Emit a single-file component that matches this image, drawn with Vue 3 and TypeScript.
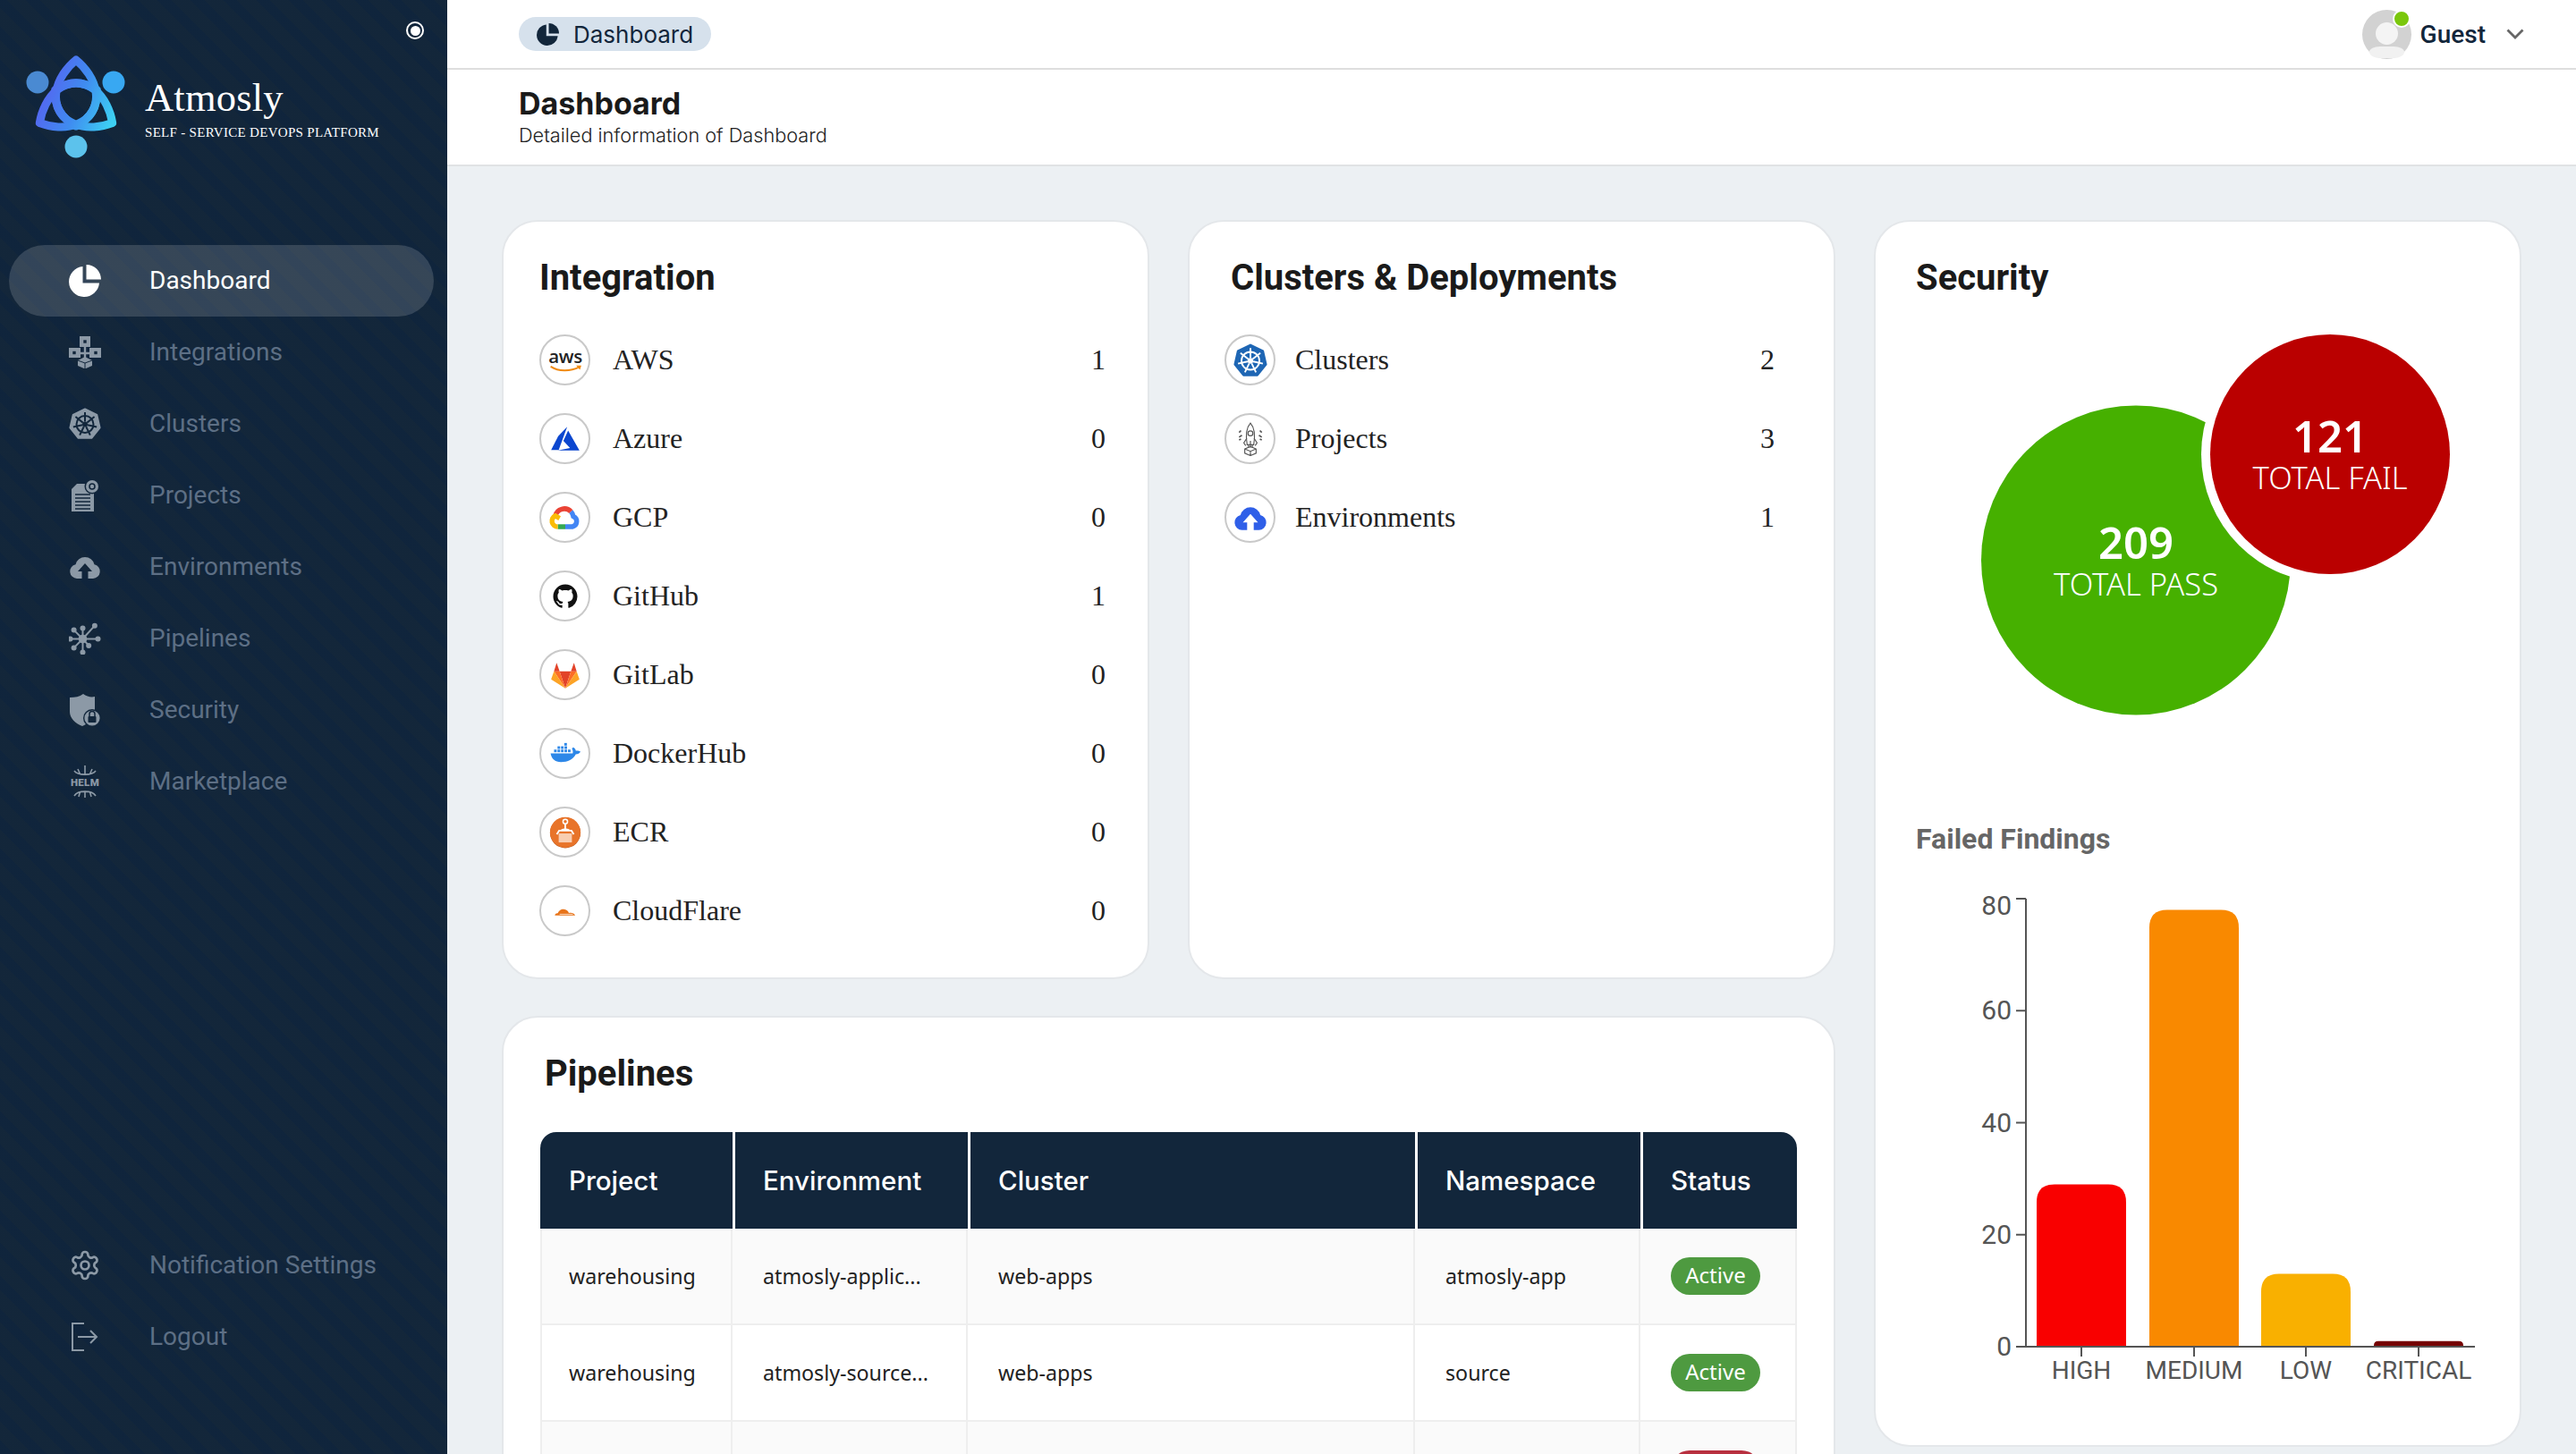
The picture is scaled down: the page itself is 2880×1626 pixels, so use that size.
<script setup lang="ts">
interface NavItem {
  label: string
  icon: string
  active?: boolean
}

interface CountItem {
  label: string
  icon: string
  count: number
}

// Chart geometry
const chartLeft = 168
const chartTop = 20
const chartBottom = 521
const pxPerUnit = (chartBottom - chartTop) / 80

// Helpers for the icons that repeat a shape around a circle
const polar = (cx: number, cy: number, r: number, deg: number) => {
  const a = (deg * Math.PI) / 180
  return [+(cx + r * Math.cos(a)).toFixed(2), +(cy + r * Math.sin(a)).toFixed(2)]
}

const heptagon = (fill: string) => {
  const pts = [0, 1, 2, 3, 4, 5, 6].map((i) => polar(18, 18.5, 17, -90 + (i * 360) / 7).join(',')).join(' ')
  return `<polygon points="${pts}" fill="${fill}" stroke="${fill}" stroke-width="2" stroke-linejoin="round"/>`
}

const wheel = (color: string, sw: number) => {
  const spokes = [0, 1, 2, 3, 4, 5, 6]
    .map((i) => {
      const deg = -90 + (i * 360) / 7
      const [x1, y1] = polar(18, 18.5, 3, deg)
      const [x2, y2] = polar(18, 18.5, 13.5, deg)
      return `<path d="M${x1} ${y1}L${x2} ${y2}"/>`
    })
    .join('')
  return `<g fill="none" stroke="${color}" stroke-width="${sw}"><circle cx="18" cy="18.5" r="9.5"/>${spokes}</g><circle cx="18" cy="18.5" r="3" fill="${color}"/>`
}

const cloud = 'M9 31A8 8 0 0 1 7.5 15.2A10.8 10.8 0 0 1 28.5 15.2A8 8 0 0 1 27 31H21.5V23H26L18 14L10 23H14.5V31Z'
const pie = '<path d="M15.5 2A17 17 0 1 0 34 20.5H15.5Z"/><path d="M19.5 0A16.5 16.5 0 0 1 36 16.5H19.5Z"/>'

const hubDots = [
  [-90, 12], [-48, 20], [0, 17], [48, 10], [90, 15], [135, 14], [180, 14], [-135, 14]
]
  .map(([deg, r]) => {
    const [x, y] = polar(15.5, 18.5, r, deg)
    return `<path d="M15.5 18.5L${x} ${y}" stroke="#8c99a6" stroke-width="2"/><circle cx="${x}" cy="${y}" r="3"/>`
  })
  .join('')

const icons: Record<string, string> = {
  pie,
  integrations:
    '<rect x="12" y="0" width="12" height="12"/><rect x="0" y="13" width="13" height="11"/><rect x="23" y="13" width="13" height="11"/>' +
    '<path d="M18 10V25M11 19H25" stroke="#8c99a6" stroke-width="2.4"/><path d="M18 23L26 27V33L18 36.5L10 33V27Z"/>' +
    '<rect x="16.3" y="4.3" width="3.4" height="3.4" fill="#12263b"/><rect x="4.3" y="16.8" width="3.4" height="3.4" fill="#12263b"/><rect x="28.3" y="16.8" width="3.4" height="3.4" fill="#12263b"/>' +
    '<path d="M18 30V36M10 27L18 30L26 27" stroke="#12263b" stroke-width="1" fill="none"/>',
  clusters: heptagon('#8c99a6') + wheel('#12263b', 2),
  projects:
    '<path d="M9 5H21V36H3V11Z"/><path d="M19 5H28V36H19Z"/>' +
    '<path d="M7 17H24M7 21H24M7 25H24M7 29H24M7 33H24" stroke="#12263b" stroke-width="1.4"/>' +
    '<circle cx="26" cy="8" r="8.5" fill="#12263b"/><circle cx="26" cy="8" r="7"/><circle cx="26" cy="8" r="3" fill="none" stroke="#12263b" stroke-width="1.6"/>',
  cloud: `<path d="${cloud}"/>`,
  hub: `<circle cx="15.5" cy="18.5" r="4.8"/>${hubDots}`,
  shield:
    '<path d="M1 4C7 4 12 3 16 0C20 3 25 4 29 3V20C29 28 22 33 15 36C7 33 1 27 1 20Z"/>' +
    '<circle cx="26" cy="27" r="10" fill="#12263b"/><circle cx="26" cy="27" r="8.6"/>' +
    '<rect x="21.5" y="25" width="9" height="7" rx="1" fill="#12263b"/><path d="M23 25V22.5A3 3 0 0 1 29 22.5V25" fill="none" stroke="#12263b" stroke-width="1.5"/>',
  helm:
    '<g fill="none" stroke="#8c99a6" stroke-width="1.6"><path d="M6 6C10 11.5 26 11.5 30 6M18 0V10M10 4L12.5 9.5M26 4L23.5 9.5"/><path d="M6 34C10 27.5 26 27.5 30 34M18 36V28.5M11 35L12.5 29.5M25 35L23.5 29.5"/></g>' +
    '<text x="18" y="23" text-anchor="middle" font-family="Roboto, sans-serif" font-weight="900" font-size="11.5" letter-spacing=".3">HELM</text>',
  gear:
    '<g transform="scale(1.5)" fill="none" stroke="#8c99a6" stroke-width="1.8"><path d="M12.22 2h-.44a2 2 0 0 0-2 2v.18a2 2 0 0 1-1 1.73l-.43.25a2 2 0 0 1-2 0l-.15-.08a2 2 0 0 0-2.73.73l-.22.38a2 2 0 0 0 .73 2.73l.15.1a2 2 0 0 1 1 1.72v.51a2 2 0 0 1-1 1.74l-.15.09a2 2 0 0 0-.73 2.73l.22.38a2 2 0 0 0 2.73.73l.15-.08a2 2 0 0 1 2 0l.43.25a2 2 0 0 1 1 1.73V20a2 2 0 0 0 2 2h.44a2 2 0 0 0 2-2v-.18a2 2 0 0 1 1-1.73l.43-.25a2 2 0 0 1 2 0l.15.08a2 2 0 0 0 2.73-.73l.22-.39a2 2 0 0 0-.73-2.73l-.15-.08a2 2 0 0 1-1-1.74v-.5a2 2 0 0 1 1-1.74l.15-.09a2 2 0 0 0 .73-2.73l-.22-.38a2 2 0 0 0-2.73-.73l-.15.08a2 2 0 0 1-2 0l-.43-.25a2 2 0 0 1-1-1.73V4a2 2 0 0 0-2-2z"/><circle cx="12" cy="12" r="3"/></g>',
  logout:
    '<path d="M17 3H4V33H17M10 18H31M24 11L31 18L24 25" fill="none" stroke="#8c99a6" stroke-width="2"/>',

  aws:
    '<text x="18" y="20.5" text-anchor="middle" font-family="Open Sans, sans-serif" font-weight="600" font-size="19.5" letter-spacing="-.4" fill="#222">aws</text>' +
    '<path d="M2.5 24.5C11 30 23 30 33 25" fill="none" stroke="#f08a12" stroke-width="1.8"/><path d="M29.5 23.5L35 23.5L33.5 28Z" fill="#f08a12"/>',
  azure:
    '<g fill="#0c47cf"><path d="M20 5L10.5 15L3 29.5H11Z"/><path d="M21 9L16 20L23 27.5L10 30H33Z"/></g>',
  gcp:
    '<g fill="none" stroke-width="5.2">' +
    '<path d="M7.5 16A9.7 9.7 0 0 1 24 11.5" stroke="#ea4335"/>' +
    '<path d="M24 11.5A9.5 9.5 0 0 1 26.5 16.5A5.8 5.8 0 0 1 25.5 27.5H18" stroke="#4285f4"/>' +
    '<path d="M18 27.5H10" stroke="#34a853"/>' +
    '<path d="M10 27.5A6 6 0 0 1 7.5 16L12 18.5" stroke="#fbbc05"/></g>',
  github:
    '<g transform="translate(5.2 5.2) scale(1.6)"><path fill="#111" d="M8 0C3.58 0 0 3.58 0 8c0 3.54 2.29 6.53 5.47 7.59.4.07.55-.17.55-.38 0-.19-.01-.82-.01-1.49-2.01.37-2.53-.49-2.69-.94-.09-.23-.48-.94-.82-1.13-.28-.15-.68-.52-.01-.53.63-.01 1.08.58 1.23.82.72 1.21 1.87.87 2.33.66.07-.52.28-.87.51-1.07-1.78-.2-3.64-.89-3.64-3.95 0-.87.31-1.59.82-2.15-.08-.2-.36-1.02.08-2.12 0 0 .67-.21 2.2.82.64-.18 1.32-.27 2-.27.68 0 1.36.09 2 .27 1.53-1.04 2.2-.82 2.2-.82.44 1.1.16 1.92.08 2.12.51.56.82 1.27.82 2.15 0 3.07-1.87 3.75-3.65 3.95.29.25.54.73.54 1.48 0 1.07-.01 1.93-.01 2.2 0 .21.15.46.55.38A8.013 8.013 0 0016 8c0-4.42-3.58-8-8-8z"/></g>',
  gitlab:
    '<path d="M18 32L12 14H24Z" fill="#e24329"/><path d="M18 32L12 14H6Z" fill="#fc6d26"/><path d="M18 32L24 14H30Z" fill="#fc6d26"/>' +
    '<path d="M6 14L3 22.5L18 32Z" fill="#fca326"/><path d="M30 14L33 22.5L18 32Z" fill="#fca326"/>' +
    '<path d="M6 14L8.8 5L12 14Z" fill="#e24329"/><path d="M30 14L27.2 5L24 14Z" fill="#e24329"/>',
  docker:
    '<g fill="#2d87e8" transform="translate(1.5 1) scale(.92)"><path d="M1 18H26.5C27 16 26.5 13.5 25.5 12.5L27 11C29 12 30 13.5 30 15C31.5 14.5 34 15 35.5 16C34.5 18 32.5 19 30 19C27 25 21 28 13 28C6 28 2 24 1 18Z"/>' +
    '<rect x="5" y="13.6" width="3" height="3"/><rect x="9" y="13.6" width="3" height="3"/><rect x="13" y="13.6" width="3" height="3"/><rect x="17" y="13.6" width="3" height="3"/><rect x="21" y="13.6" width="3" height="3"/>' +
    '<rect x="9" y="9.8" width="3" height="3"/><rect x="13" y="9.8" width="3" height="3"/><rect x="17" y="9.8" width="3" height="3"/><rect x="16.8" y="6" width="3" height="3"/></g>',
  ecr:
    '<circle cx="18" cy="18.3" r="16.2" fill="#b9581f"/><circle cx="18" cy="17.8" r="16.2" fill="#e8742a"/>' +
    '<rect x="11" y="19" width="14" height="9.5" fill="#f8cdb0"/>' +
    '<path d="M18 9V15M9 20L11.5 16H24.5L27 20" fill="none" stroke="#fff" stroke-width="1.8"/><path d="M11.5 16Q18 11 24.5 16" fill="#fff"/>' +
    '<circle cx="18" cy="6.5" r="2.4" fill="none" stroke="#fff" stroke-width="1.5"/>',
  cloudflare:
    '<path d="M7 22.5C7 21 8.2 20 10 20.2C11 17.5 13.5 15.6 16.3 15.8C19 16 21 17.6 21.8 19.8C24.8 19 27.6 20.3 28.5 22.5Z" fill="#e8741a"/><path d="M12 21.2H26" stroke="#fff" stroke-width=".7"/>',
  k8s: heptagon('#1e66b4') + wheel('#fff', 1.8),
  rocket:
    '<g fill="none" stroke="#555" stroke-width="1.1"><path d="M18 1C13.5 6 13 15 14.5 24H21.5C23 15 22.5 6 18 1Z"/><circle cx="18" cy="12" r="2.6"/>' +
    '<path d="M14.2 17L11 22L13 25M21.8 17L25 22L23 25M16 24V27M20 24V27M18 20V27"/>' +
    '<path d="M12 28.5L18 26L24 28.5V33L18 35.5L12 33ZM12 28.5L18 31L24 28.5M18 31V35.5"/>' +
    '<path d="M8 9L6 11M9 14L6 16M8 18L6 19M28 9L30 11M27 14L30 16M28 18L30 19" stroke-width="1.6"/></g>',
  envCloud: `<path d="${cloud}" fill="#2f5fe8"/>`
}

const mainNav: NavItem[] = [
  { label: 'Dashboard', icon: 'pie', active: true },
  { label: 'Integrations', icon: 'integrations' },
  { label: 'Clusters', icon: 'clusters' },
  { label: 'Projects', icon: 'projects' },
  { label: 'Environments', icon: 'cloud' },
  { label: 'Pipelines', icon: 'hub' },
  { label: 'Security', icon: 'shield' },
  { label: 'Marketplace', icon: 'helm' }
]

const footerNav: NavItem[] = [
  { label: 'Notification Settings', icon: 'gear' },
  { label: 'Logout', icon: 'logout' }
]

const integrations: CountItem[] = [
  { label: 'AWS', icon: 'aws', count: 1 },
  { label: 'Azure', icon: 'azure', count: 0 },
  { label: 'GCP', icon: 'gcp', count: 0 },
  { label: 'GitHub', icon: 'github', count: 1 },
  { label: 'GitLab', icon: 'gitlab', count: 0 },
  { label: 'DockerHub', icon: 'docker', count: 0 },
  { label: 'ECR', icon: 'ecr', count: 0 },
  { label: 'CloudFlare', icon: 'cloudflare', count: 0 }
]

const deployments: CountItem[] = [
  { label: 'Clusters', icon: 'k8s', count: 2 },
  { label: 'Projects', icon: 'rocket', count: 3 },
  { label: 'Environments', icon: 'envCloud', count: 1 }
]

const pipelines = [
  { project: 'warehousing', environment: 'atmosly-applic...', cluster: 'web-apps', namespace: 'atmosly-app', status: 'Active' },
  { project: 'warehousing', environment: 'atmosly-source...', cluster: 'web-apps', namespace: 'source', status: 'Active' },
  { project: '', environment: '', cluster: '', namespace: '', status: '' }
]

const yTicks = [80, 60, 40, 20, 0].map((v) => ({ value: v, y: chartBottom - v * pxPerUnit }))

const bars = [
  { label: 'HIGH', value: 29, color: '#f90000', x: 180 },
  { label: 'MEDIUM', value: 78, color: '#f98900', x: 306 },
  { label: 'LOW', value: 13, color: '#f9b000', x: 431 },
  { label: 'CRITICAL', value: 1, color: '#750000', x: 557 }
].map((b) => {
  const h = b.value * pxPerUnit
  const r = Math.min(20, h * 0.8)
  const top = chartBottom - h
  return {
    ...b,
    center: b.x + 50,
    d: `M${b.x} ${chartBottom}V${top + r}Q${b.x} ${top} ${b.x + r} ${top}H${b.x + 100 - r}Q${b.x + 100} ${top} ${b.x + 100} ${top + r}V${chartBottom}Z`
  }
})
</script>

<template>
  <div class="app">
    <aside class="sidebar">
      <div class="pin"><span></span></div>

      <div class="brand">
        <svg class="brand-mark" viewBox="0 0 140 190" width="140" height="190">
          <defs>
            <linearGradient id="knotFill" gradientUnits="userSpaceOnUse" x1="40" y1="90" x2="130" y2="125">
              <stop offset="0" stop-color="#5a5cf0" />
              <stop offset="0.55" stop-color="#3f8cf0" />
              <stop offset="1" stop-color="#3dd0f2" />
            </linearGradient>
            <mask id="knotMask" maskUnits="userSpaceOnUse" x="0" y="0" width="140" height="190">
              <g fill="none" stroke="#fff" stroke-width="9" stroke-linejoin="round">
                <path d="M85 67C64 84 47 120 85 141C123 120 106 84 85 67Z" />
                <path d="M85 67C64 84 47 120 85 141C123 120 106 84 85 67Z" transform="rotate(120 85 114)" />
                <path d="M85 67C64 84 47 120 85 141C123 120 106 84 85 67Z" transform="rotate(240 85 114)" />
              </g>
            </mask>
          </defs>
          <rect width="140" height="190" fill="url(#knotFill)" mask="url(#knotMask)" />
          <circle cx="42" cy="92" r="12.5" fill="#4a8ad2" />
          <circle cx="127" cy="92" r="12.5" fill="#38a8f2" />
          <circle cx="85" cy="164" r="12.5" fill="#5cc2ec" />
        </svg>
        <div class="brand-text">
          <div class="brand-name">Atmosly</div>
          <div class="brand-tag">SELF - SERVICE DEVOPS PLATFORM</div>
        </div>
      </div>

      <nav class="nav">
        <a v-for="item in mainNav" :key="item.label" class="nav-item" :class="{ active: item.active }">
          <svg class="nav-icon" viewBox="0 0 36 36" v-html="icons[item.icon]"></svg>
          <span>{{ item.label }}</span>
        </a>
      </nav>

      <nav class="nav nav-bottom">
        <a v-for="item in footerNav" :key="item.label" class="nav-item">
          <svg class="nav-icon" viewBox="0 0 36 36" v-html="icons[item.icon]"></svg>
          <span>{{ item.label }}</span>
        </a>
      </nav>
    </aside>

    <div class="main">
      <header class="topbar">
        <div class="crumb">
          <svg viewBox="0 0 36 36" width="25" height="25" v-html="icons.pie"></svg>
          <span>Dashboard</span>
        </div>
        <div class="user">
          <div class="avatar">
            <span class="avatar-head"></span>
            <span class="avatar-body"></span>
            <span class="avatar-dot"></span>
          </div>
          <span class="user-name">Guest</span>
          <svg width="20" height="12" viewBox="0 0 20 12">
            <path d="M1.5 1.5L10 10L18.5 1.5" fill="none" stroke="#666" stroke-width="2.8" />
          </svg>
        </div>
      </header>

      <div class="page-head">
        <h1>Dashboard</h1>
        <p>Detailed information of Dashboard</p>
      </div>

      <div class="content">
        <section class="card card-integration">
          <h2>Integration</h2>
          <ul class="count-list">
            <li v-for="item in integrations" :key="item.label">
              <span class="logo"><svg viewBox="0 0 36 36" v-html="icons[item.icon]"></svg></span>
              <span class="count-label">{{ item.label }}</span>
              <span class="count-value">{{ item.count }}</span>
            </li>
          </ul>
        </section>

        <section class="card card-clusters">
          <h2>Clusters &amp; Deployments</h2>
          <ul class="count-list">
            <li v-for="item in deployments" :key="item.label">
              <span class="logo"><svg viewBox="0 0 36 36" v-html="icons[item.icon]"></svg></span>
              <span class="count-label">{{ item.label }}</span>
              <span class="count-value">{{ item.count }}</span>
            </li>
          </ul>
        </section>

        <section class="card card-security">
          <h2>Security</h2>
          <svg class="venn" viewBox="0 0 719 436" width="719" height="436">
            <circle cx="291" cy="256.5" r="173" fill="#46b000" />
            <circle cx="508" cy="138" r="144" fill="#fff" />
            <circle cx="508" cy="138" r="134" fill="#ba0000" />
            <text class="venn-num" x="508" y="136">121</text>
            <text class="venn-sub" x="508" y="177">TOTAL FAIL</text>
            <text class="venn-num" x="291" y="255">209</text>
            <text class="venn-sub" x="291" y="296">TOTAL PASS</text>
          </svg>
          <h3>Failed Findings</h3>
          <svg class="chart" viewBox="0 0 719 566" width="719" height="566">
            <path v-for="bar in bars" :key="bar.label" :d="bar.d" :fill="bar.color" />
            <g stroke="#555" stroke-width="2" fill="none">
              <path :d="`M${chartLeft} ${chartTop}V${chartBottom}H670`" />
              <path v-for="tick in yTicks" :key="tick.value" :d="`M${chartLeft - 11} ${tick.y}H${chartLeft}`" />
              <path v-for="bar in bars" :key="bar.label" :d="`M${bar.center} ${chartBottom}v11`" />
            </g>
            <text
              v-for="tick in yTicks"
              :key="tick.value"
              class="tick y-tick"
              :x="chartLeft - 16"
              :y="tick.y + (tick.value === 80 ? 18 : 10)"
            >{{ tick.value }}</text>
            <text v-for="bar in bars" :key="bar.label" class="tick x-tick" :x="bar.center" y="557">{{ bar.label }}</text>
          </svg>
        </section>

        <section class="card card-pipelines">
          <h2>Pipelines</h2>
          <table class="pipe-table">
            <colgroup>
              <col style="width: 215px" />
              <col style="width: 263px" />
              <col style="width: 500px" />
              <col style="width: 252px" />
              <col style="width: 175px" />
            </colgroup>
            <thead>
              <tr>
                <th>Project</th>
                <th>Environment</th>
                <th>Cluster</th>
                <th>Namespace</th>
                <th>Status</th>
              </tr>
            </thead>
            <tbody>
              <tr v-for="(row, i) in pipelines" :key="i">
                <td>{{ row.project }}</td>
                <td>{{ row.environment }}</td>
                <td>{{ row.cluster }}</td>
                <td>{{ row.namespace }}</td>
                <td>
                  <span class="badge" :class="{ failed: !row.status }">{{ row.status }}</span>
                </td>
              </tr>
            </tbody>
          </table>
        </section>
      </div>
    </div>
  </div>
</template>

<style>
html,
body {
  margin: 0;
  background: #ecf0f3;
}
</style>

<style scoped>
.app {
  display: flex;
  width: 2880px;
  height: 1626px;
  overflow: hidden;
  background: #ecf0f3;
  font-family: Roboto, sans-serif;
}

/* Sidebar */
.sidebar {
  position: relative;
  display: flex;
  flex-direction: column;
  flex: 0 0 500px;
  background-color: #12263b;
  background-image: repeating-linear-gradient(45deg, rgba(8, 32, 64, 0.22) 0 11px, rgba(30, 42, 50, 0.1) 11px 26px);
}

.pin {
  position: absolute;
  top: 24px;
  left: 454px;
  width: 16px;
  height: 16px;
  border: 2px solid #fff;
  border-radius: 50%;
  display: flex;
  align-items: center;
  justify-content: center;
}

.pin span {
  width: 11px;
  height: 11px;
  border-radius: 50%;
  background: #fff;
}

.brand {
  display: flex;
  height: 274px;
  box-sizing: border-box;
}

.brand-mark {
  flex: none;
}

.brand-text {
  color: #fff;
  font-family: 'Liberation Serif', serif;
  margin: 84px 0 0 22px;
}

.brand-name {
  font-size: 44.5px;
  line-height: 50px;
  letter-spacing: 0.2px;
}

.brand-tag {
  font-size: 15px;
  line-height: 20px;
  margin-top: 4px;
  letter-spacing: 0.3px;
  white-space: nowrap;
}

.nav {
  display: flex;
  flex-direction: column;
}

.nav-bottom {
  margin-top: auto;
  padding-bottom: 91px;
}

.nav-item {
  display: flex;
  align-items: center;
  height: 80px;
  margin: 0 15px 0 10px;
  padding-left: 67px;
  border-radius: 40px;
  font-size: 28px;
  color: #5d6f85;
}

.nav-item span {
  margin-top: -2px;
}

.nav-item.active {
  background: rgba(255, 255, 255, 0.15);
  color: #fff;
}

.nav-icon {
  width: 36px;
  height: 36px;
  margin-right: 54px;
  fill: #8c99a6;
  flex: none;
}

.nav-item.active .nav-icon {
  fill: #fff;
}

/* Header */
.main {
  flex: 1;
  min-width: 0;
  display: flex;
  flex-direction: column;
}

.topbar {
  display: flex;
  align-items: center;
  justify-content: space-between;
  height: 76px;
  padding: 0 58px 0 80px;
  background: #fff;
  border-bottom: 2px solid #dedede;
  flex: none;
}

.crumb {
  display: flex;
  align-items: center;
  gap: 16px;
  height: 38px;
  padding: 0 20px;
  border-radius: 19px;
  background: #d6e1ec;
  color: #12263b;
  font-family: Inter, sans-serif;
  font-size: 26px;
  fill: #12263b;
}

.user {
  display: flex;
  align-items: center;
}

.avatar {
  position: relative;
  width: 55px;
  height: 55px;
  margin-right: 10px;
  border-radius: 50%;
  background: #d2d2d2;
}

.avatar-head {
  position: absolute;
  left: 15px;
  top: 14px;
  width: 25px;
  height: 25px;
  border-radius: 50%;
  background: #f4f4f4;
}

.avatar-body {
  position: absolute;
  left: 8px;
  bottom: 1px;
  width: 39px;
  height: 13px;
  border-radius: 20px 20px 20px 20px / 10px 10px 12px 12px;
  background: #f1f1f1;
}

.avatar-dot {
  position: absolute;
  top: 0;
  right: 1px;
  width: 16px;
  height: 16px;
  border: 2px solid #fff;
  border-radius: 50%;
  background: #7ac70c;
}

.user-name {
  font-size: 28px;
  font-weight: 500;
  color: #12263b;
  margin-right: 23px;
}

.page-head {
  height: 106px;
  padding-left: 80px;
  background: #fff;
  border-bottom: 2px solid #e0e2e4;
  flex: none;
}

.page-head h1 {
  margin: 0;
  padding-top: 17px;
  font-family: Inter, sans-serif;
  font-size: 34px;
  font-weight: 700;
  line-height: 42px;
  color: #1a1a1a;
}

.page-head p {
  margin: 0;
  font-family: Inter, sans-serif;
  font-size: 21.7px;
  font-weight: 300;
  line-height: 28px;
  color: #222;
}

/* Cards */
.content {
  display: grid;
  grid-template-columns: repeat(3, 724px);
  grid-template-rows: 849px auto;
  column-gap: 43px;
  row-gap: 41px;
  padding: 60px 0 0 61px;
}

.card {
  box-sizing: border-box;
  background: #fff;
  border: 2px solid #e4e7ea;
  border-radius: 40px;
  padding-top: 40px;
}

.card h2 {
  margin: 0;
  font-size: 40px;
  font-weight: 700;
  line-height: 46px;
  color: #1a1a1a;
}

.card-integration {
  padding-left: 40px;
  padding-right: 47px;
}

.card-clusters {
  padding-left: 39px;
  padding-right: 66px;
}

.card-clusters h2 {
  margin-left: 7px;
}

.count-list {
  list-style: none;
  margin: 40px 0 0;
  padding: 0;
  display: flex;
  flex-direction: column;
  gap: 31px;
}

.count-list li {
  display: flex;
  align-items: center;
  height: 57px;
  font-family: 'Liberation Serif', serif;
  font-size: 32px;
  color: #222;
}

.logo {
  box-sizing: border-box;
  display: flex;
  align-items: center;
  justify-content: center;
  flex: none;
  width: 57px;
  height: 57px;
  margin-right: 25px;
  border: 2px solid #c9c9c9;
  border-radius: 50%;
}

.card-clusters .logo {
  margin-right: 22px;
}

.logo svg {
  width: 38px;
  height: 38px;
}

.count-label {
  flex: 1;
}

/* Security */
.card-security {
  grid-column: 3;
  grid-row: 1 / span 2;
  height: 1372px;
  align-self: start;
}

.card-security h2 {
  margin-left: 45px;
}

.venn {
  display: block;
  margin-top: 36px;
}

.venn-num {
  font-family: 'Noto Sans', sans-serif;
  font-size: 49px;
  font-weight: 600;
  fill: #fff;
  text-anchor: middle;
}

.venn-sub {
  font-family: 'Noto Sans', sans-serif;
  font-size: 34.5px;
  font-weight: 300;
  fill: #fff;
  text-anchor: middle;
}

.card-security h3 {
  margin: 112px 0 0 45px;
  font-size: 32px;
  font-weight: 700;
  line-height: 40px;
  color: #666;
}

.chart {
  display: block;
  margin-top: 27px;
}

.tick {
  font-family: Roboto, sans-serif;
  fill: #555;
}

.y-tick {
  font-size: 30px;
  text-anchor: end;
}

.x-tick {
  font-size: 28px;
  text-anchor: middle;
}

/* Pipelines */
.card-pipelines {
  grid-column: 1 / span 2;
  padding-left: 41px;
  padding-right: 40px;
  padding-bottom: 40px;
}

.card-pipelines h2 {
  margin-left: 5px;
}

.pipe-table {
  width: 1405px;
  margin-top: 42px;
  table-layout: fixed;
  border-collapse: separate;
  border-spacing: 0;
}

.pipe-table th {
  height: 108px;
  padding: 0 0 0 31px;
  background: #12263b;
  border-left: 3px solid #fff;
  box-sizing: border-box;
  font-family: Inter, sans-serif;
  font-size: 29.5px;
  font-weight: 500;
  text-align: left;
  color: #fff;
}

.pipe-table th:first-child {
  border-left: 0;
  padding-left: 32px;
  border-top-left-radius: 18px;
}

.pipe-table th:last-child {
  border-top-right-radius: 18px;
}

.pipe-table td {
  box-sizing: border-box;
  height: 108px;
  padding: 0 0 0 34px;
  border-right: 2px solid #eeeeee;
  border-bottom: 2px solid #eeeeee;
  font-family: 'Noto Sans', sans-serif;
  font-size: 23.2px;
  color: #222;
}

.pipe-table td:first-child {
  border-left: 2px solid #eeeeee;
  padding-left: 30px;
}

.pipe-table tbody tr:nth-child(odd) td {
  background: #fafafa;
}

.badge {
  display: inline-block;
  box-sizing: border-box;
  width: 100px;
  height: 42px;
  line-height: 40px;
  border-radius: 21px;
  background: #4e9a40;
  color: #fff;
  text-align: center;
  font-size: 24px;
  vertical-align: middle;
}

.badge.failed {
  background: #b8303f;
}
</style>
